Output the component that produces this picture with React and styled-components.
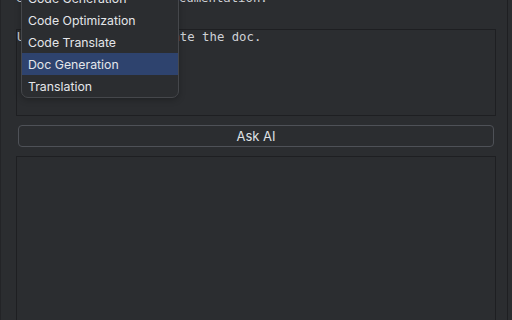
import React from "react";
import styled, { createGlobalStyle } from "styled-components";

const Global = createGlobalStyle`
  html, body {
    margin: 0;
    padding: 0;
    background: #2b2d30;
    overflow: hidden;
  }
`;

const Panel = styled.div`
  position: relative;
  width: 508px;
  height: 320px;
  box-sizing: border-box;
  padding: 0 11px 0 15px;
  border-left: 1px solid #232427;
  border-right: 1px solid #1e1f22;
  display: flex;
  flex-direction: column;
  overflow: hidden;
  font-family: "DejaVu Sans Mono", monospace;
`;

const Prompt = styled.div`
  margin-top: -10px;
  height: 39px;
  font-size: 12.3px;
  line-height: 16px;
  color: #cfd1d6;
  white-space: nowrap;
`;

const Editor = styled.div`
  height: 87px;
  border: 1px solid #1e1f22;
  box-sizing: border-box;
  padding: 0;
  font-size: 12.3px;
  line-height: 14px;
  color: #cfd1d6;
  white-space: nowrap;
  background: #2b2d30;
  flex: none;
`;

const AskButton = styled.button`
  margin: 9px 2px 0 2px;
  height: 22px;
  flex: none;
  background: transparent;
  border: 1px solid #4e5157;
  border-radius: 4px;
  color: #dfe1e5;
  font-family: "Inter", "Noto Sans", sans-serif;
  font-size: 13px;
  padding: 0;
`;

const Output = styled.div`
  margin-top: 9px;
  flex: 1;
  border: 1px solid #1e1f22;
  border-bottom: none;
  background: #2b2d30;
`;

const Menu = styled.div`
  position: absolute;
  left: 20px;
  top: -18px;
  width: 158px;
  box-sizing: border-box;
  padding: 4px 0 0 0;
  background: #2b2d30;
  border: 1px solid #45474b;
  border-radius: 7px;
  overflow: hidden;
  box-shadow: 0 2px 6px rgba(0, 0, 0, 0.25);
`;

const Item = styled.div`
  height: 22px;
  display: flex;
  align-items: center;
  padding-left: 6px;
  font-family: "Inter", "Noto Sans", sans-serif;
  font-size: 12.3px;
  color: #e4e6ea;
  background: ${(p) => (p.$active ? "#2e436e" : "transparent")};
`;

const items = [
  "Code Generation",
  "Code Optimization",
  "Code Translate",
  "Doc Generation",
  "Translation",
];

export default function App() {
  return (
    <>
      <Global />
      <Panel>
        <Prompt>Generate the code's documentation.</Prompt>
        <Editor>Use the code to generate the doc.</Editor>
        <AskButton>Ask AI</AskButton>
        <Output />
        <Menu>
          {items.map((it) => (
            <Item key={it} $active={it === "Doc Generation"}>
              {it}
            </Item>
          ))}
        </Menu>
      </Panel>
    </>
  );
}
